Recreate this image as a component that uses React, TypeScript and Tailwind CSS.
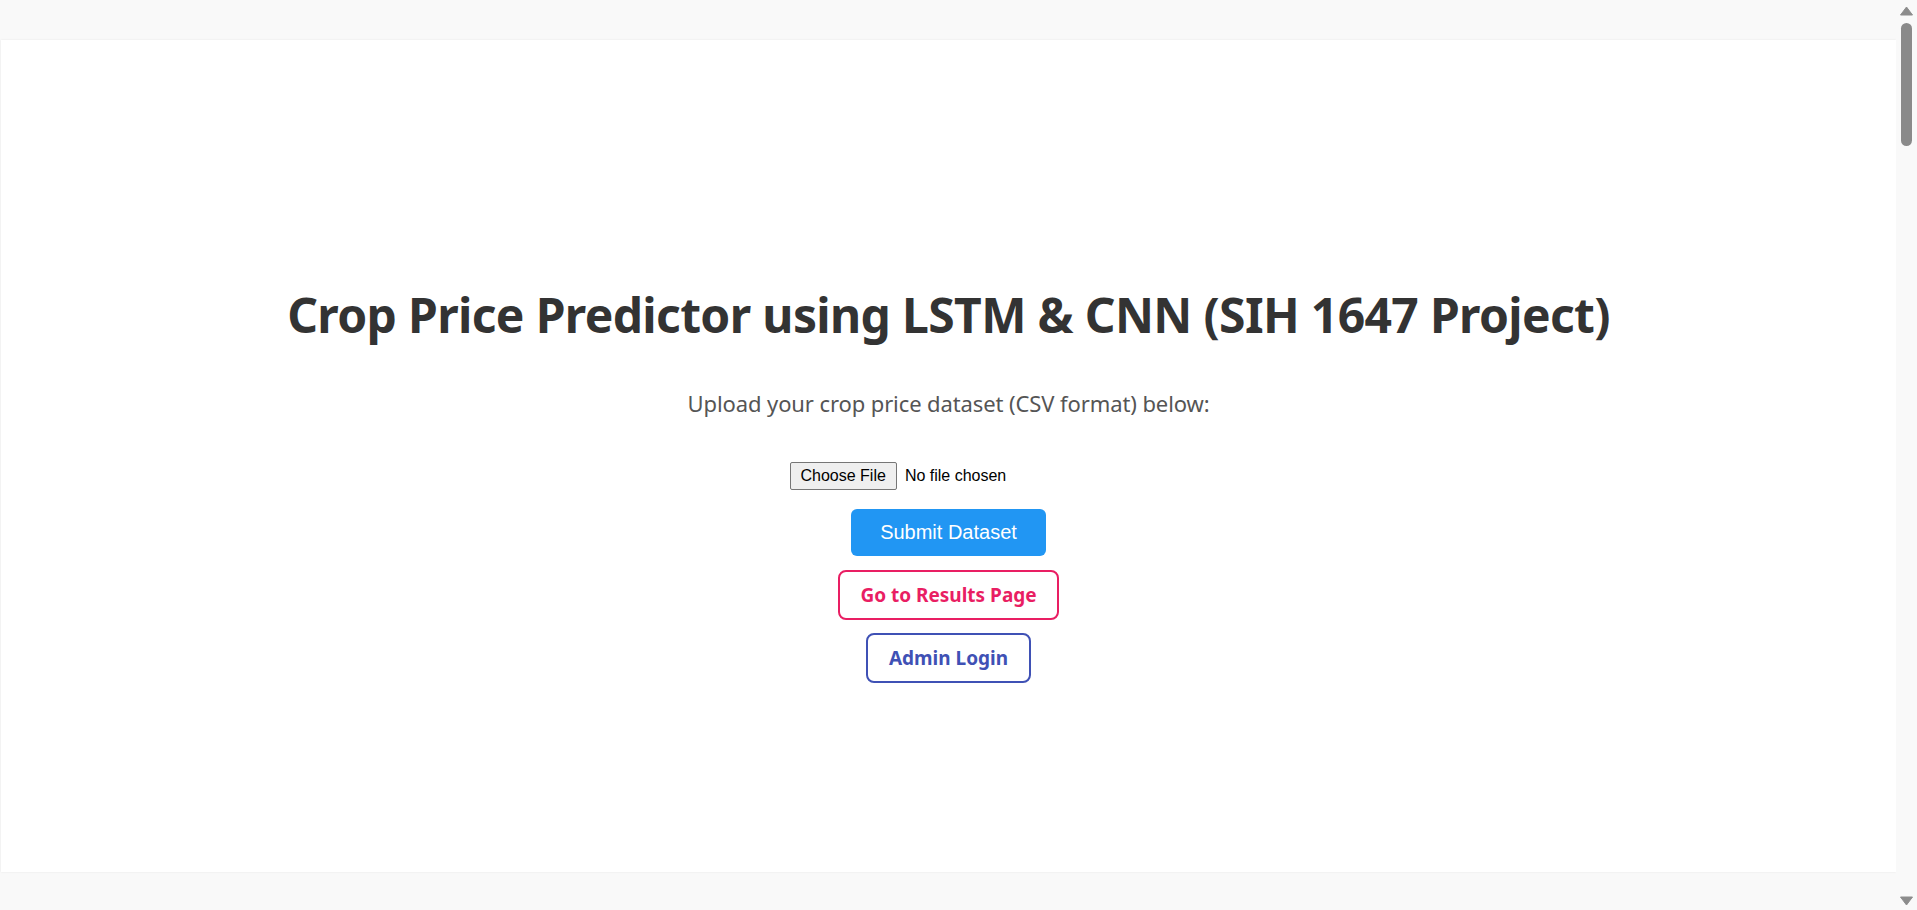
const ScrollBar = () => {
  return (
    <div className="flex h-[910px] w-[21px] flex-col items-center bg-[#f9f9f9]">
      <svg width="13" height="10" viewBox="0 0 13 10" className="mt-[6px]">
        <path d="M6.5 1 L12.5 9 L0.5 9 Z" fill="#8c8c8c" stroke="#8c8c8c" strokeLinejoin="round" />
      </svg>
      <div className="mt-[7px] h-[123px] w-[11px] rounded-full bg-[#8a8a8a]" />
      <div className="flex-1" />
      <svg width="13" height="10" viewBox="0 0 13 10" className="mb-[4px]">
        <path d="M0.5 1 L12.5 1 L6.5 9 Z" fill="#8c8c8c" stroke="#8c8c8c" strokeLinejoin="round" />
      </svg>
    </div>
  );
};

const App = () => {
  return (
    <div className="flex h-[910px] overflow-hidden bg-[#f9f9f9] font-['Noto_Sans',sans-serif]">
      <div className="w-[1896px] pt-[40px]">
        <div className="ml-[1px] flex h-[832px] flex-col items-center bg-white pt-[243px] shadow-[0_0_2px_rgba(0,0,0,0.08)]">
          <h1 className="text-[48px] font-bold leading-[64px] tracking-[-0.65px] text-[#333]">
            Crop Price Predictor using LSTM &amp; CNN (SIH 1647 Project)
          </h1>
          <p className="mt-[42px] text-[22px] leading-[28px] tracking-[-0.1px] text-[#555]">
            Upload your crop price dataset (CSV format) below:
          </p>
          <form className="mt-[45px] flex flex-col items-center">
            <input
              type="file"
              accept=".csv"
              className="w-[318px] font-['Liberation_Sans',Arial,sans-serif] text-[16px] leading-[20px] text-black file:mr-[8px] file:rounded-[2px] file:border file:border-[#767676] file:bg-[#efefef] file:px-[10px] file:py-[3px] file:text-black"
            />
            <button
              type="button"
              className="mt-[19px] rounded-[6px] bg-[#2196f3] px-[29px] py-[12px] font-['Liberation_Sans',Arial,sans-serif] text-[20px] leading-[23px] text-white"
            >
              Submit Dataset
            </button>
          </form>
          <a className="mt-[14px] rounded-[8px] border-2 border-[#e91e63] px-[20px] py-[10px] text-[19px] leading-[26px] font-bold text-[#e91e63]">
            Go to Results Page
          </a>
          <a className="mt-[13px] rounded-[8px] border-2 border-[#3f51b5] px-[21px] py-[10px] text-[19px] leading-[26px] font-bold text-[#3f51b5]">
            Admin Login
          </a>
        </div>
      </div>
      <ScrollBar />
    </div>
  );
};

export default App;
